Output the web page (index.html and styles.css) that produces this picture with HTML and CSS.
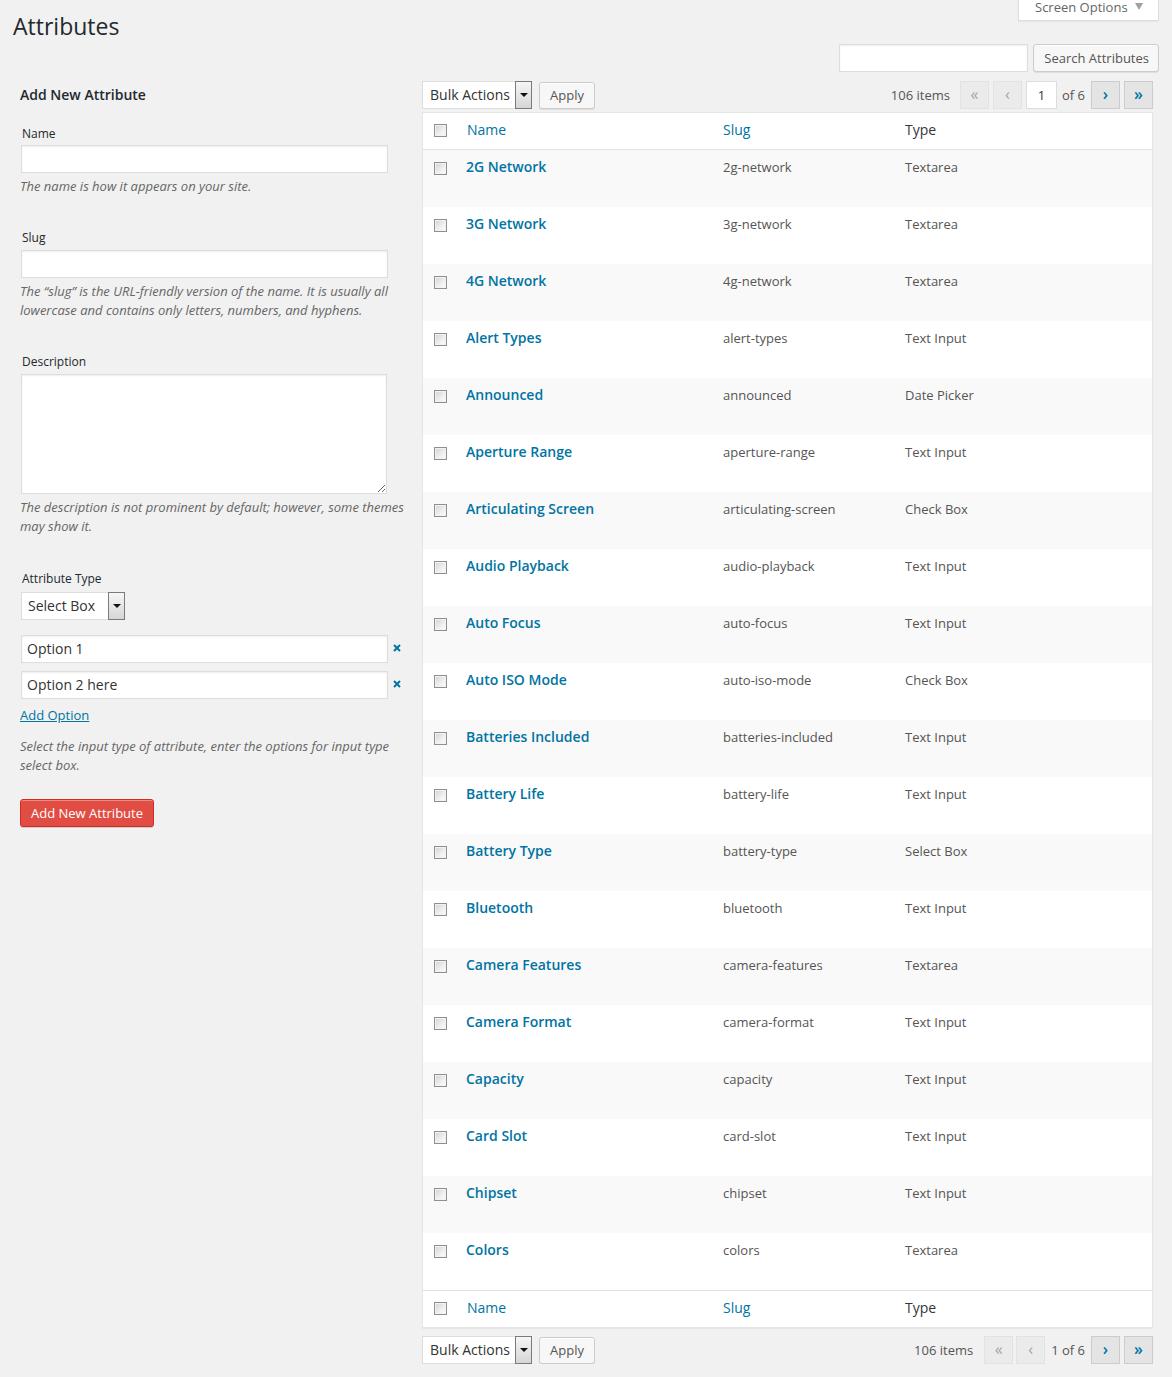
FILE: index.html
```html
<!DOCTYPE html>
<html>
<head>
<meta charset="utf-8">
<title>Attributes</title>
<link rel="stylesheet" href="styles.css">
</head>
<body>
<div class="top">
  <h1 class="title">Attributes</h1>
  <div class="screen-options"><span>Screen Options</span><span class="so-arrow"></span></div>
</div>
<div class="search">
  <div class="search-input"></div>
  <div class="btn">Search Attributes</div>
</div>
<div class="cols">
  <div class="left">
    <h2 class="form-title">Add New Attribute</h2>
    <div class="field first">
      <label class="lbl">Name</label>
      <div class="input"></div>
      <p class="help">The name is how it appears on your site.</p>
    </div>
    <div class="field">
      <label class="lbl">Slug</label>
      <div class="input"></div>
      <p class="help">The “slug” is the URL-friendly version of the name. It is usually all lowercase and contains only letters, numbers, and hyphens.</p>
    </div>
    <div class="field">
      <label class="lbl">Description</label>
      <textarea class="textarea"></textarea>
      <p class="help">The description is not prominent by default; however, some themes may show it.</p>
    </div>
    <div class="field type-field">
      <label class="lbl">Attribute Type</label>
      <div class="select type-select"><span class="select-val">Select Box</span><span class="select-arrow"><span class="tri"></span></span></div>
      <div class="opt-row first-opt">
        <div class="input opt-input">Option 1</div>
        <svg class="remove" width="8" height="8" viewBox="0 0 8 8"><path d="M1 1L7 7M7 1L1 7" stroke="#0074a2" stroke-width="2" fill="none"/></svg>
      </div>
      <div class="opt-row">
        <div class="input opt-input">Option 2 here</div>
        <svg class="remove" width="8" height="8" viewBox="0 0 8 8"><path d="M1 1L7 7M7 1L1 7" stroke="#0074a2" stroke-width="2" fill="none"/></svg>
      </div>
      <a class="add-option" href="#">Add Option</a>
      <p class="help help-type">Select the input type of attribute, enter the options for input type select box.</p>
    </div>
    <div class="btn-primary">Add New Attribute</div>
  </div>

  <div class="right">
    <div class="tablenav">
      <div class="select bulk"><span class="select-val">Bulk Actions</span><span class="select-arrow"><span class="tri"></span></span></div>
      <div class="btn apply">Apply</div>
      <div class="pagination">
        <span class="items">106 items</span>
        <span class="pbtn disabled">«</span>
        <span class="pbtn disabled">‹</span>
        <span class="pinput">1</span>
        <span class="ptext">of 6</span>
        <span class="pbtn">›</span>
        <span class="pbtn">»</span>
      </div>
    </div>
    <table class="list">
      <colgroup><col class="c-cb"><col class="c-name"><col class="c-slug"><col class="c-type"></colgroup>
      <thead>
        <tr><th class="check"><span class="cb"></span></th><th><a href="#">Name</a></th><th><a href="#">Slug</a></th><th>Type</th></tr>
      </thead>
      <tbody>
        <tr><td class="check"><span class="cb"></span></td><td class="name"><a href="#">2G Network</a></td><td>2g-network</td><td>Textarea</td></tr>
        <tr><td class="check"><span class="cb"></span></td><td class="name"><a href="#">3G Network</a></td><td>3g-network</td><td>Textarea</td></tr>
        <tr><td class="check"><span class="cb"></span></td><td class="name"><a href="#">4G Network</a></td><td>4g-network</td><td>Textarea</td></tr>
        <tr><td class="check"><span class="cb"></span></td><td class="name"><a href="#">Alert Types</a></td><td>alert-types</td><td>Text Input</td></tr>
        <tr><td class="check"><span class="cb"></span></td><td class="name"><a href="#">Announced</a></td><td>announced</td><td>Date Picker</td></tr>
        <tr><td class="check"><span class="cb"></span></td><td class="name"><a href="#">Aperture Range</a></td><td>aperture-range</td><td>Text Input</td></tr>
        <tr><td class="check"><span class="cb"></span></td><td class="name"><a href="#">Articulating Screen</a></td><td>articulating-screen</td><td>Check Box</td></tr>
        <tr><td class="check"><span class="cb"></span></td><td class="name"><a href="#">Audio Playback</a></td><td>audio-playback</td><td>Text Input</td></tr>
        <tr><td class="check"><span class="cb"></span></td><td class="name"><a href="#">Auto Focus</a></td><td>auto-focus</td><td>Text Input</td></tr>
        <tr><td class="check"><span class="cb"></span></td><td class="name"><a href="#">Auto ISO Mode</a></td><td>auto-iso-mode</td><td>Check Box</td></tr>
        <tr><td class="check"><span class="cb"></span></td><td class="name"><a href="#">Batteries Included</a></td><td>batteries-included</td><td>Text Input</td></tr>
        <tr><td class="check"><span class="cb"></span></td><td class="name"><a href="#">Battery Life</a></td><td>battery-life</td><td>Text Input</td></tr>
        <tr><td class="check"><span class="cb"></span></td><td class="name"><a href="#">Battery Type</a></td><td>battery-type</td><td>Select Box</td></tr>
        <tr><td class="check"><span class="cb"></span></td><td class="name"><a href="#">Bluetooth</a></td><td>bluetooth</td><td>Text Input</td></tr>
        <tr><td class="check"><span class="cb"></span></td><td class="name"><a href="#">Camera Features</a></td><td>camera-features</td><td>Textarea</td></tr>
        <tr><td class="check"><span class="cb"></span></td><td class="name"><a href="#">Camera Format</a></td><td>camera-format</td><td>Text Input</td></tr>
        <tr><td class="check"><span class="cb"></span></td><td class="name"><a href="#">Capacity</a></td><td>capacity</td><td>Text Input</td></tr>
        <tr><td class="check"><span class="cb"></span></td><td class="name"><a href="#">Card Slot</a></td><td>card-slot</td><td>Text Input</td></tr>
        <tr><td class="check"><span class="cb"></span></td><td class="name"><a href="#">Chipset</a></td><td>chipset</td><td>Text Input</td></tr>
        <tr><td class="check"><span class="cb"></span></td><td class="name"><a href="#">Colors</a></td><td>colors</td><td>Textarea</td></tr>
      </tbody>
      <tfoot>
        <tr><th class="check"><span class="cb"></span></th><th><a href="#">Name</a></th><th><a href="#">Slug</a></th><th>Type</th></tr>
      </tfoot>
    </table>
    <div class="tablenav bottom">
      <div class="select bulk"><span class="select-val">Bulk Actions</span><span class="select-arrow"><span class="tri"></span></span></div>
      <div class="btn apply">Apply</div>
      <div class="pagination">
        <span class="items">106 items</span>
        <span class="pbtn disabled">«</span>
        <span class="pbtn disabled">‹</span>
        <span class="ptext wide">1 of 6</span>
        <span class="pbtn">›</span>
        <span class="pbtn">»</span>
      </div>
    </div>
  </div>
</div>
</body>
</html>
```
FILE: styles.css
```css
* { box-sizing: border-box; }
html, body { margin: 0; padding: 0; }
body {
  background: #f1f1f1;
  font-family: "Open Sans", "Liberation Sans", sans-serif;
  font-size: 13px;
  line-height: 1.4;
  color: #444;
}

/* top area */
.top {
  display: flex;
  justify-content: space-between;
  align-items: flex-start;
  height: 44px;
}
.title {
  margin: 12px 0 0 13px;
  font-size: 23px;
  font-weight: 400;
  line-height: 29px;
  color: #23282d;
}
.screen-options {
  margin-right: 13px;
  width: 141px;
  height: 21px;
  background: #fff;
  border: 1px solid #ddd;
  border-top: 0;
  box-shadow: 0 1px 1px rgba(0,0,0,.04);
  display: flex;
  align-items: flex-start;
  padding: 0 15px 0 16px;
  color: #666;
  font-size: 13px;
  line-height: 14px;
}
.so-arrow {
  margin-left: auto;
  margin-top: 3px;
  width: 0;
  height: 0;
  border-left: 4px solid transparent;
  border-right: 4px solid transparent;
  border-top: 7px solid #a0a0a0;
}

.search {
  display: flex;
  justify-content: flex-end;
  gap: 5px;
  padding-right: 13px;
  height: 28px;
}
.search-input {
  width: 189px;
  height: 28px;
  background: #fff;
  border: 1px solid #ddd;
  box-shadow: inset 0 1px 2px rgba(0,0,0,.07);
}
.search .btn { padding: 0 9px 0 10px; }
.btn {
  height: 28px;
  padding: 0 10px;
  border: 1px solid #ccc;
  border-radius: 3px;
  background: #f7f7f7;
  color: #555;
  font-size: 13px;
  line-height: 26px;
  box-shadow: inset 0 1px 0 #fff, 0 1px 0 rgba(0,0,0,.08);
  white-space: nowrap;
}

/* columns */
.cols {
  display: flex;
  align-items: flex-start;
  padding: 0 19px 0 20px;
}
.left { width: 385px; flex: none; }
.right { flex: 1; margin-left: 17px; min-width: 0; }

.form-title {
  margin: 13px 0 0;
  font-size: 14px;
  font-weight: 600;
  line-height: 20px;
  color: #23282d;
}
.field { margin-top: 33px; }
.field.first { margin-top: 20px; }
.field.type-field { margin-top: 34px; }
.lbl {
  display: block;
  font-size: 12px;
  line-height: 18px;
  padding-left: 2px;
  color: #23282d;
}
.input {
  margin: 3px 0 0 1px;
  width: 367px;
  height: 28px;
  background: #fff;
  border: 1px solid #ddd;
  box-shadow: inset 0 1px 2px rgba(0,0,0,.07);
  font-size: 14px;
  line-height: 26px;
  padding-left: 5px;
  color: #333;
}
.field.first .input { margin-top: 2px; }
.textarea {
  display: block;
  margin: 3px 0 0 1px;
  width: 366px;
  height: 120px;
  background: #fff;
  border: 1px solid #ddd;
  box-shadow: inset 0 1px 2px rgba(0,0,0,.07);
  font-family: inherit;
  resize: vertical;
}
.help {
  margin: 4px 0 0;
  font-style: italic;
  font-size: 13px;
  line-height: 19px;
  color: #666;
}
.help-type { margin-top: 12px; }

.select {
  display: flex;
  height: 28px;
}
.select-val {
  flex: 1;
  background: #fff;
  border: 1px solid #ddd;
  border-right: 0;
  padding-left: 7px;
  font-size: 14px;
  line-height: 26px;
  color: #333;
  white-space: nowrap;
}
.type-select .select-val { padding-left: 6px; }
.select-arrow {
  width: 17px;
  flex: none;
  border: 1px solid #7a7a7a;
  background: linear-gradient(#f6f6f6, #d6d6d6);
  display: flex;
  align-items: center;
  justify-content: center;
}
.tri {
  width: 0;
  height: 0;
  border-left: 4px solid transparent;
  border-right: 4px solid transparent;
  border-top: 4px solid #111;
  margin-top: -1px;
}
.type-select { width: 104px; margin: 4px 0 0 1px; }

.opt-row {
  display: flex;
  align-items: flex-start;
  margin-top: 8px;
}
.opt-row.first-opt { margin-top: 15px; }
.opt-row .input { margin-top: 0; }
.remove { margin: 9px 0 0 5px; }

.add-option {
  display: block;
  margin-top: 6px;
  line-height: 20px;
  font-size: 13px;
  color: #0074a2;
  text-decoration: underline;
  width: max-content;
}

.btn-primary {
  margin-top: 24px;
  display: inline-block;
  height: 28px;
  padding: 0 10px;
  background: #e14d43;
  border: 1px solid #d02c21;
  border-radius: 3px;
  color: #fff;
  font-size: 13px;
  line-height: 26px;
  box-shadow: inset 0 1px 0 #ec8a85, 0 1px 0 rgba(0,0,0,.15);
}

/* table nav */
.tablenav {
  display: flex;
  align-items: center;
  height: 28px;
  margin-top: 9px;
}
.tablenav.bottom { margin-top: 8px; }
.bulk { width: 110px; }
.apply { margin-left: 7px; height: 27px; line-height: 25px; }
.pagination {
  margin-left: auto;
  display: flex;
  align-items: center;
  gap: 4px;
  color: #555;
  font-size: 13px;
}
.items { margin-right: 6px; }
.pbtn {
  width: 29px;
  height: 28px;
  display: flex;
  align-items: center;
  justify-content: center;
  border: 1px solid #ccc;
  background: #e4e4e4;
  color: #0074a2;
  font-size: 16px;
  font-weight: 600;
  line-height: 1;
  padding-bottom: 2px;
}
.pbtn.disabled {
  border-color: #e2e2e2;
  background: #ebebeb;
  color: #a0a5aa;
  font-weight: 400;
}
.pinput {
  width: 31px;
  height: 28px;
  border: 1px solid #ddd;
  background: #fff;
  text-align: center;
  line-height: 26px;
  color: #333;
}
.ptext { margin: 0 2px 0 1px; }
.ptext.wide { margin: 0 2px 0 2px; }
.bottom .items { margin-right: 7px; }
.bottom .pbtn.disabled + .pbtn.disabled { margin-left: -1px; }

/* table */
.list {
  margin-top: 3px;
  width: 100%;
  border-collapse: separate;
  border-spacing: 0;
  table-layout: fixed;
  background: #fff;
  border: 1px solid #e5e5e5;
  box-shadow: 0 1px 1px rgba(0,0,0,.04);
}
.c-cb { width: 34px; }
.c-name { width: 256px; }
.c-slug { width: 182px; }
.c-type { width: 257px; }
.list th, .list td {
  padding: 7px 10px 9px;
  text-align: left;
  vertical-align: top;
  line-height: 20px;
}
.list th {
  font-weight: 400;
  font-size: 14px;
  color: #32373c;
}
.list th a { color: #0074a2; text-decoration: none; }
.list thead th { border-bottom: 1px solid #e1e1e1; }
.list tfoot th { border-top: 1px solid #e1e1e1; }
.list tbody tr { height: 57px; }
.list tbody tr:nth-child(odd) { background: #f9f9f9; }
.list td { font-size: 13px; color: #555; }
.list td.name { padding-left: 9px; }
.list td.name a {
  font-size: 14px;
  font-weight: 600;
  color: #0074a2;
  text-decoration: none;
}
.list .check { padding: 11px 0 0 11px; }
.list tbody .check { padding-top: 12px; }
.cb {
  display: block;
  width: 13px;
  height: 13px;
  border: 1px solid #8f8f8f;
  background: linear-gradient(135deg, #d2d2d2 0%, #f0f0f0 60%, #fdfdfd 100%);
  box-shadow: inset 0 0 0 1px #f2f2f2;
}
```
